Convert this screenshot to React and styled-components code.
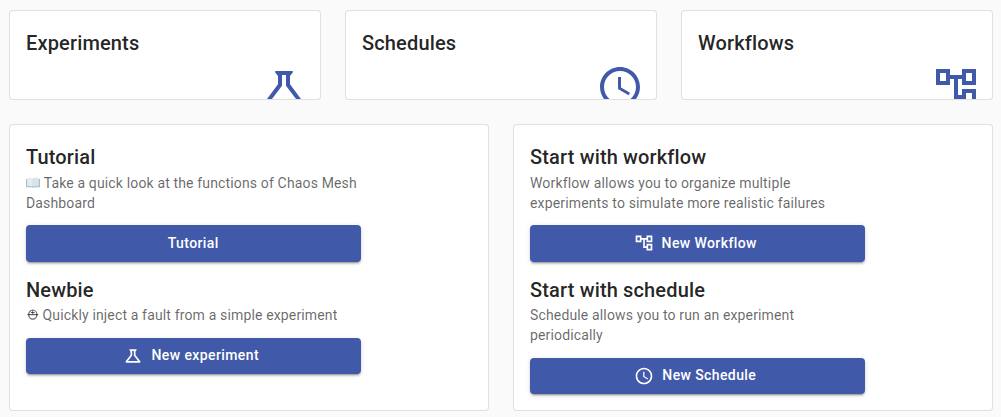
import React from 'react';
import styled, { createGlobalStyle } from 'styled-components';

const GlobalStyle = createGlobalStyle`
  *, *::before, *::after { box-sizing: border-box; }
  body {
    margin: 0;
    background: #fafafa;
    color: rgba(0, 0, 0, 0.87);
    font-family: Roboto, "Liberation Sans", "DejaVu Sans", sans-serif;
  }
`;

const Page = styled.main`
  display: grid;
  gap: 24px;
  width: 1001px;
  padding: 10px 8px 6px 9px;
`;

const Columns = styled.div`
  display: grid;
  grid-template-columns: repeat(${(p) => p.$count}, 1fr);
  gap: 24px;
`;

const Card = styled.section`
  background: #fff;
  border: 1px solid rgba(0, 0, 0, 0.12);
  border-radius: 4px;
  padding: 16px;
`;

const StatCard = styled(Card)`
  display: flex;
  flex-direction: column;
  height: 90px;
  padding-right: 12px;
  padding-bottom: 0;
  overflow: hidden;
`;

const Title = styled.h2`
  margin: 0;
  font-size: 20px;
  font-weight: 500;
  line-height: 1.6;
  letter-spacing: 0.0075em;
`;

const StatIcon = styled.div`
  display: flex;
  align-self: flex-end;
  flex-shrink: 0;
  margin-top: 4px;
  color: #4159a9;
`;

const Steps = styled.div`
  display: flex;
  flex-direction: column;
  gap: 12px;
  width: 75%;
`;

const Description = styled.p`
  margin: -0.1px 0 12.1px;
  color: rgba(0, 0, 0, 0.6);
  font-size: 14px;
  line-height: 1.43;
  letter-spacing: 0.01071em;
`;

const Button = styled.button`
  display: flex;
  align-items: center;
  justify-content: center;
  width: 100%;
  padding: 5.9px 16px 6.1px;
  border: 0;
  border-radius: 4px;
  background: #4159a9;
  color: #fff;
  font: 500 14px/1.75 Roboto, "Liberation Sans", sans-serif;
  letter-spacing: 0.02857em;
  cursor: pointer;
  box-shadow: 0 3px 1px -2px rgba(0, 0, 0, 0.2), 0 2px 2px 0 rgba(0, 0, 0, 0.14),
    0 1px 5px 0 rgba(0, 0, 0, 0.12);
`;

const ButtonIcon = styled.span`
  display: inline-flex;
  margin: 0 ${(p) => 8 + p.$nudge}px 0 ${(p) => -4 - p.$nudge}px;
`;

const Svg = styled.svg`
  display: block;
  width: ${(p) => p.$size}px;
  height: ${(p) => p.$size}px;
  fill: currentColor;
`;

const Pictogram = styled.svg`
  width: ${(p) => p.$width}px;
  height: 11px;
  vertical-align: baseline;
`;

const ICONS = {
  flask:
    'M13 11.33 18 18H6l5-6.67V6h2m2.96-2H8.04c-.42 0-.65.48-.39.81L9 6.5v4.17L3.2 18.4c-.49.66-.02 1.6.8 1.6h16c.82 0 1.29-.94.8-1.6L15 10.67V6.5l1.35-1.69c.26-.33.03-.81-.39-.81z',
  clock:
    'M11.99 2C6.47 2 2 6.48 2 12s4.47 10 9.99 10C17.52 22 22 17.52 22 12S17.52 2 11.99 2zM12 20c-4.42 0-8-3.58-8-8s3.58-8 8-8 8 3.58 8 8-3.58 8-8 8zm.5-13H11v6l5.25 3.15.75-1.23-4.5-2.67z',
  tree:
    'M22 11V3h-7v3H9V3H2v8h7V8h2v10h4v3h7v-8h-7v3h-2V8h2v3h7zM7 9H4V5h3v4zm10 6h3v4h-3v-4zm0-10h3v4h-3V5z',
};

const Icon = ({ name, size }) => (
  <Svg $size={size} viewBox="0 0 24 24" aria-hidden="true">
    <path d={ICONS[name]} />
  </Svg>
);

const Book = () => (
  <Pictogram $width={14.3} viewBox="0 0 14.3 11" aria-hidden="true">
    <path d="M0 2h14v8.2H8.2l-1.2.8-1.2-.8H0z" fill="#a3c2d9" />
    <path d="M1.2 1.2C3.2.6 5.4.7 7 1.6v8C5.4 8.8 3.2 8.7 1.2 9.2z" fill="#e6ebee" />
    <path d="M12.8 1.2C10.8.6 8.6.7 7 1.6v8c1.6-.8 3.8-.9 5.8-.4z" fill="#dce3e8" />
    <path d="M7 1.6v8" stroke="#c5d0d8" strokeWidth=".5" />
  </Pictogram>
);

const Helmet = () => (
  <Pictogram $width={12.9} viewBox="0 0 12.9 11" aria-hidden="true">
    <g fill="none" stroke="currentColor">
      <ellipse cx="6.8" cy="5.6" rx="4.1" ry="4.6" strokeWidth="1.2" />
      <path d="M1.4 5.6h10.8" strokeWidth="1.2" />
      <path d="M6.8 1.2v4.4M4.9 3.5h3.8" strokeWidth="1" />
    </g>
  </Pictogram>
);

const Stat = ({ title, icon }) => (
  <StatCard>
    <Title>{title}</Title>
    <StatIcon>
      <Icon name={icon} size={48} />
    </StatIcon>
  </StatCard>
);

const Step = ({ title, text, action, icon }) => (
  <div>
    <Title>{title}</Title>
    <Description>{text}</Description>
    <Button>
      {icon && (
        <ButtonIcon $nudge={icon === 'flask' ? 0.15 : 0}>
          <Icon name={icon} size={20} />
        </ButtonIcon>
      )}
      {action}
    </Button>
  </div>
);

export default function App() {
  return (
    <>
      <GlobalStyle />
      <Page>
        <Columns $count={3}>
          <Stat title="Experiments" icon="flask" />
          <Stat title="Schedules" icon="clock" />
          <Stat title="Workflows" icon="tree" />
        </Columns>
        <Columns $count={2}>
          <Card>
            <Steps>
              <Step
                title="Tutorial"
                text={<><Book /> Take a quick look at the functions of Chaos Mesh Dashboard</>}
                action="Tutorial"
              />
              <Step
                title="Newbie"
                text={<><Helmet /> Quickly inject a fault from a simple experiment</>}
                action="New experiment"
                icon="flask"
              />
            </Steps>
          </Card>
          <Card>
            <Steps>
              <Step
                title="Start with workflow"
                text="Workflow allows you to organize multiple experiments to simulate more realistic failures"
                action="New Workflow"
                icon="tree"
              />
              <Step
                title="Start with schedule"
                text="Schedule allows you to run an experiment periodically"
                action="New Schedule"
                icon="clock"
              />
            </Steps>
          </Card>
        </Columns>
      </Page>
    </>
  );
}
